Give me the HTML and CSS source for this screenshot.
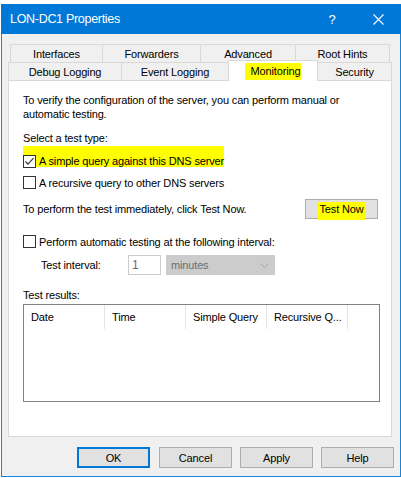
FILE: index.html
```html
<!DOCTYPE html>
<html>
<head>
<meta charset="utf-8">
<link rel="stylesheet" href="styles.css">
</head>
<body>
<div class="window">
  <div class="titlebar">
    <span class="title">LON-DC1 Properties</span>
    <span class="tb-btn tb-help">?</span>
    <span class="tb-btn tb-close">
      <svg width="11" height="11" viewBox="0 0 11 11"><path d="M0.5 0.5 L10.5 10.5 M10.5 0.5 L0.5 10.5" stroke="#fff" stroke-width="1.1" fill="none"/></svg>
    </span>
  </div>

  <div class="tabs">
    <div class="tabrow row1">
      <div class="tab w-int">Interfaces</div>
      <div class="tab w-fwd">Forwarders</div>
      <div class="tab w-adv">Advanced</div>
      <div class="tab w-root last">Root Hints</div>
    </div>
    <div class="tabrow row2">
      <div class="tab w-debug">Debug Logging</div>
      <div class="tab w-event">Event Logging</div>
      <div class="tab w-mon selected"><span class="hl hl-tab">Monitoring</span></div>
      <div class="tab w-sec last noleft">Security</div>
    </div>
  </div>

  <div class="panel">
    <p class="intro">To verify the configuration of the server, you can perform manual or automatic testing.</p>
    <div class="label-type">Select a test type:</div>
    <div class="check-row hl-row">
      <svg class="cb" width="13" height="13" viewBox="0 0 13 13"><rect x="0.5" y="0.5" width="12" height="12" fill="#fff" stroke="#333"/><path d="M2.5 6.5 L5 9.2 L10.5 3.2" stroke="#333" stroke-width="1.2" fill="none"/></svg>
      <span class="cb-text">A simple query against this DNS server</span>
    </div>
    <div class="check-row row-recursive">
      <svg class="cb" width="13" height="13" viewBox="0 0 13 13"><rect x="0.5" y="0.5" width="12" height="12" fill="#fff" stroke="#333"/></svg>
      <span class="cb-text">A recursive query to other DNS servers</span>
    </div>
    <div class="perform-row">
      <span>To perform the test immediately, click Test Now.</span>
      <button class="btn btn-test"><span class="hl hl-btn">Test Now</span></button>
    </div>
    <div class="check-row row-auto">
      <svg class="cb" width="13" height="13" viewBox="0 0 13 13"><rect x="0.5" y="0.5" width="12" height="12" fill="#fff" stroke="#333"/></svg>
      <span class="cb-text">Perform automatic testing at the following interval:</span>
    </div>
    <div class="interval-row">
      <span class="interval-label">Test interval:</span>
      <span class="num-input">1</span>
      <span class="select">
        <span>minutes</span>
        <svg width="9" height="5" viewBox="0 0 9 5"><path d="M0.5 0.5 L4.5 4.5 L8.5 0.5" stroke="#a6a6a6" fill="none"/></svg>
      </span>
    </div>
    <div class="results-label">Test results:</div>
    <div class="listview">
      <div class="lv-header">
        <div class="lv-col">Date</div>
        <div class="lv-col">Time</div>
        <div class="lv-col">Simple Query</div>
        <div class="lv-col">Recursive Q...</div>
      </div>
    </div>
  </div>

  <div class="buttons">
    <button class="btn btn-dlg btn-ok">OK</button>
    <button class="btn btn-dlg">Cancel</button>
    <button class="btn btn-dlg">Apply</button>
    <button class="btn btn-dlg">Help</button>
  </div>
</div>
</body>
</html>
```
FILE: styles.css
```css
html, body {
  margin: 0;
  padding: 0;
  background: #ffffff;
}
body {
  font-family: "Liberation Sans", Arial, sans-serif;
  font-size: 11px;
  letter-spacing: -0.15px;
  color: #000;
}
.window {
  width: 400px;
  height: 473px;
  margin: 4px 0 0 1px;
  box-sizing: border-box;
  border: 1px solid #1883d7;
  border-top: 0;
  background: #f0f0f0;
  display: flex;
  flex-direction: column;
}
.titlebar {
  height: 30px;
  flex: none;
  background: #0078d7;
  color: #fff;
  display: flex;
  align-items: center;
  padding-left: 9px;
  margin: 0 -1px;
}
.title {
  font-size: 12.5px;
  letter-spacing: -0.3px;
  flex: 1;
}
.tb-btn {
  width: 46px;
  height: 30px;
  display: flex;
  align-items: center;
  justify-content: center;
}
.tb-help {
  font-size: 13px;
  letter-spacing: 0;
}
.tabs {
  margin-top: 10px;
  display: flex;
  flex-direction: column;
}
.tabrow {
  display: flex;
  height: 18px;
}
.row1 { margin-left: 8px; }
.row2 { margin-left: 6px; }
.tab {
  box-sizing: border-box;
  height: 18px;
  border-top: 1px solid #d9d9d9;
  border-left: 1px solid #d9d9d9;
  background: #f0f0f0;
  display: flex;
  align-items: center;
  justify-content: center;
  white-space: nowrap;
}
.tab.last { border-right: 1px solid #d9d9d9; }
.tab.noleft { border-left: 0; }
.w-int { width: 92px; }
.w-fwd { width: 98px; }
.w-adv { width: 95px; }
.w-root { width: 95px; }
.w-debug { width: 113px; }
.w-event { width: 107px; }
.w-mon { width: 90px; }
.w-sec { width: 74px; }
.tab.selected {
  height: 21px;
  margin-top: -2px;
  margin-bottom: -1px;
  background: #fff;
  border-right: 1px solid #d9d9d9;
  position: relative;
  z-index: 1;
}
.hl { background: #ffff00; }
.hl-tab {
  padding: 2px 1px 2px 6px;
  line-height: 13px;
}
.panel {
  box-sizing: border-box;
  width: 384px;
  height: 357px;
  margin-left: 6px;
  border: 1px solid #d9d9d9;
  background: #fff;
  padding: 0 13px 0 14px;
  display: flex;
  flex-direction: column;
  align-items: flex-start;
}
.intro {
  margin: 12px 0 0;
  line-height: 14px;
  width: 330px;
}
.label-type {
  margin-top: 10px;
  line-height: 14px;
}
.check-row {
  display: flex;
  align-items: center;
  height: 21px;
}
.cb { flex: none; }
.cb-text { margin-left: 3px; }
.hl-row {
  background: #ffff00;
  margin-top: 1px;
  height: 12px;
  padding: 9px 0 0 0;
}
.row-recursive { margin-top: 5px; }
.perform-row {
  margin-top: 6px;
  height: 20px;
  width: 100%;
  display: flex;
  align-items: center;
  justify-content: space-between;
}
.btn {
  font-family: "Liberation Sans", Arial, sans-serif;
  font-size: 11px;
  letter-spacing: -0.15px;
  color: #000;
  box-sizing: border-box;
  background: #e1e1e1;
  border: 1px solid #adadad;
  padding: 0;
  margin: 0;
  display: flex;
  align-items: center;
  justify-content: center;
}
.btn-test {
  width: 73px;
  height: 20px;
}
.hl-btn {
  padding: 1px 1px 4px 1px;
  margin-top: 3px;
  line-height: 13px;
}
.row-auto { margin-top: 12px; }
.interval-row {
  margin-top: 3px;
  margin-left: 18px;
  height: 20px;
  display: flex;
  align-items: center;
}
.interval-label { width: 87px; }
.num-input {
  box-sizing: border-box;
  width: 33px;
  height: 20px;
  border: 1px solid #cccccc;
  color: #6d6d6d;
  padding-left: 3px;
  display: flex;
  align-items: center;
  font-size: 12px;
}
.select {
  box-sizing: border-box;
  width: 109px;
  height: 20px;
  margin-left: 5px;
  background: #cccccc;
  border: 1px solid #cccccc;
  color: #6d6d6d;
  padding: 0 5px 0 4px;
  display: flex;
  align-items: center;
  justify-content: space-between;
}
.results-label {
  margin-top: 13px;
  line-height: 14px;
}
.listview {
  box-sizing: border-box;
  margin-top: 2px;
  width: 357px;
  height: 98px;
  border: 1px solid #828282;
  background: #fff;
}
.lv-header {
  display: flex;
  height: 24px;
}
.lv-col {
  box-sizing: border-box;
  width: 81px;
  border-right: 1px solid #e5e5e5;
  padding-left: 7px;
  display: flex;
  align-items: center;
  white-space: nowrap;
}
.buttons {
  margin-top: 10px;
  display: flex;
  justify-content: flex-end;
  gap: 8px;
  padding-right: 6px;
}
.btn-dlg {
  width: 73px;
  height: 21px;
}
.btn-ok {
  border: 2px solid #0078d7;
  margin-right: 1px;
}
```
